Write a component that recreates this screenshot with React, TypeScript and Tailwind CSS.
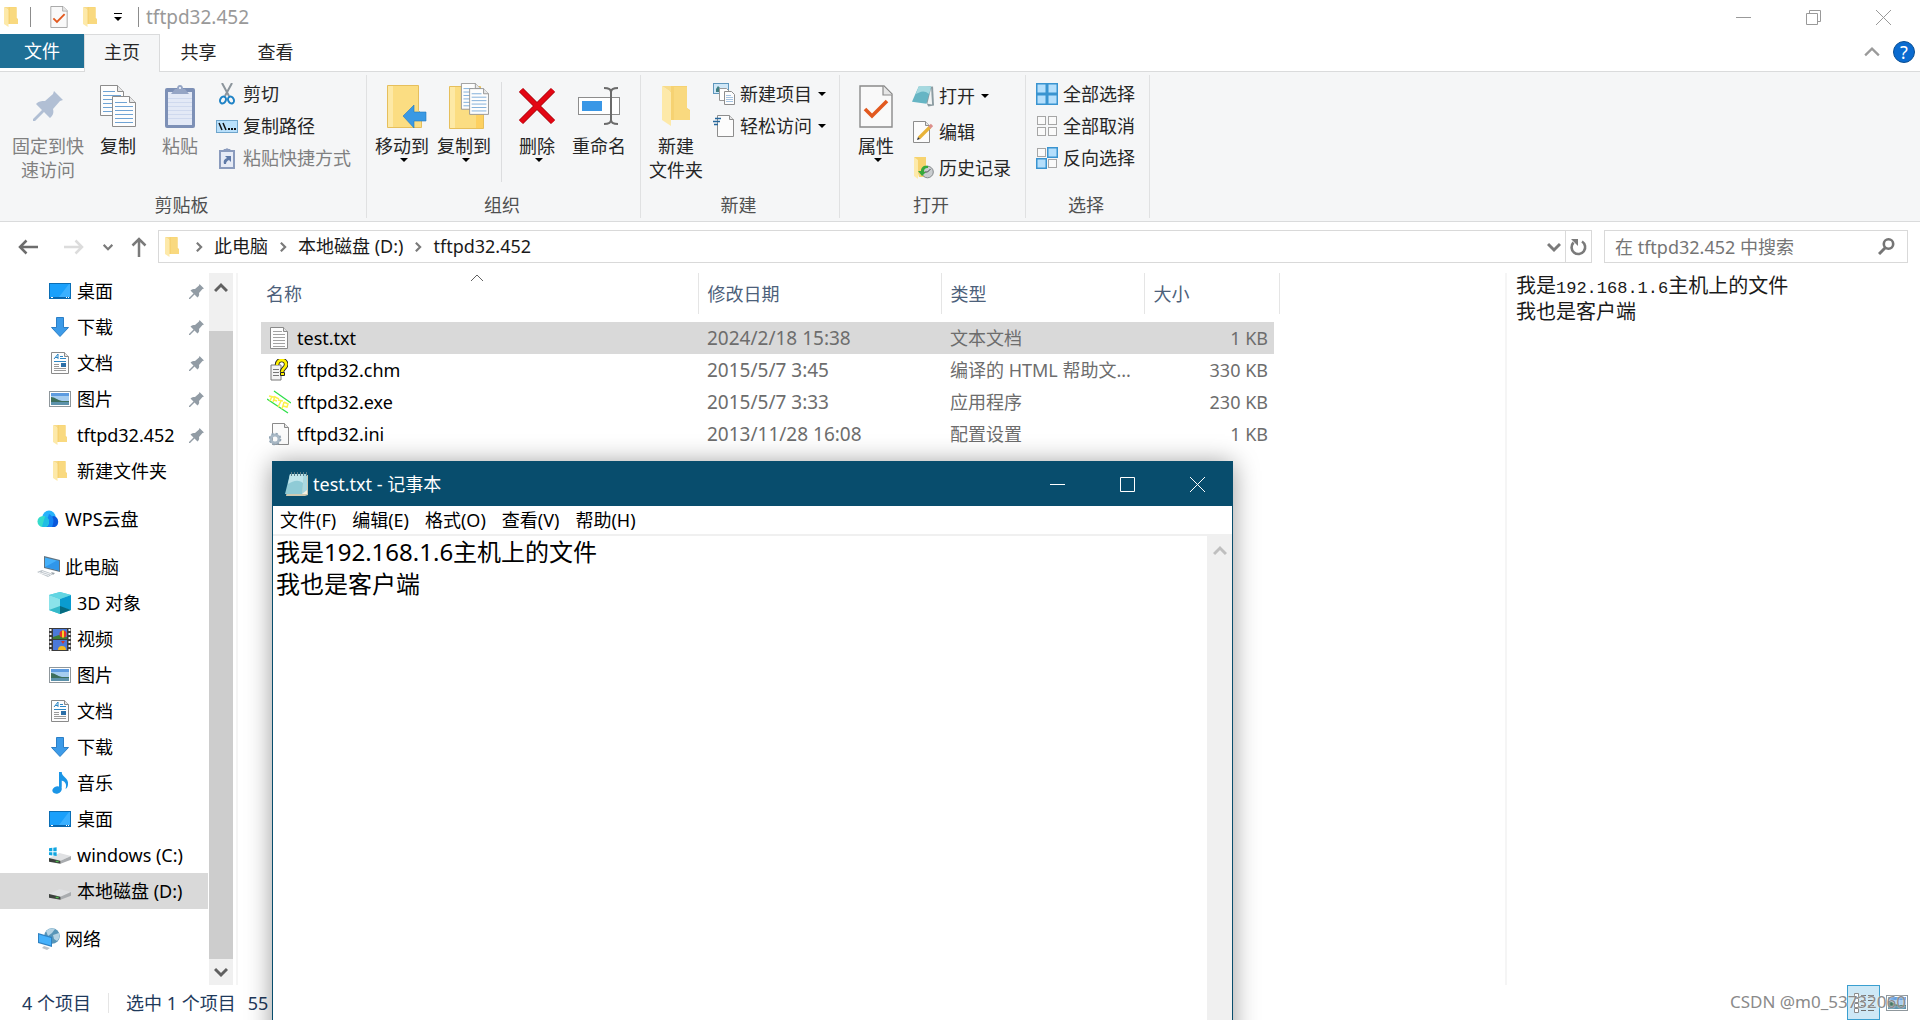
import type { ReactNode } from 'react';
import clsx from 'clsx';

type IconProps = { className?: string };

const FolderIcon = ({ className = 'w-[14px] h-5' }: IconProps) => (
  <svg viewBox="0 0 28 40" className={className} preserveAspectRatio="none" aria-hidden="true">
    <path d="M8 0h17v22l3 2v10H8z" fill="#f6d272" />
    <path d="M12 1h13v21l3 3v9H12z" fill="#f9d97f" />
    <path d="M0 0l9 6v34L0 34z" fill="#fde9a9" />
    <path d="M0 0h9v6z" fill="#f8dc8b" />
  </svg>
);

const CheckDocIcon = ({ className }: IconProps) => (
  <svg viewBox="0 0 34 43" className={className} aria-hidden="true">
    <path d="M1 1h24l8 8v33H1z" fill="#f9f9f9" stroke="#8b8b8b" strokeWidth="1.4" />
    <path d="M24 1v9h9" fill="#e6e6e6" stroke="#8b8b8b" strokeWidth="1.2" />
    <path d="M6 24l7 7 15-15" fill="none" stroke="#e2591f" strokeWidth="3.6" />
  </svg>
);

const PinIcon = ({ className }: IconProps) => (
  <svg viewBox="0 0 30 30" className={className} aria-hidden="true">
    <path
      d="M21 0l9 9-3 1-7 8c1 4 0 6-3 9l-6-6-9 9H0v-2l9-9-6-6c3-3 5-3 9-3l8-7z"
      fill="currentColor"
    />
  </svg>
);

const SheetLines = ({ x, y }: { x: number; y: number }) => (
  <g transform={`translate(${x} ${y})`}>
    <path d="M.5.5h17l6 6v24H.5z" fill="#fdfdfd" stroke="#8c8c8c" />
    <path d="M17.500.5v6h6" fill="#e8e8e8" stroke="#8c8c8c" />
    <path d="M3 6.500h12M3 10.500h18M3 14.500h18M3 18.500h18M3 22.500h18M3 26.500h18" stroke="#6fa3d4" />
  </g>
);

const CopyIcon = () => (
  <svg width="36" height="42" viewBox="0 0 36 42" aria-hidden="true">
    <SheetLines x={0} y={0} />
    <SheetLines x={12} y={11} />
  </svg>
);

const PasteIcon = () => (
  <svg width="30" height="44" viewBox="0 0 30 44" aria-hidden="true">
    <rect x="0" y="4" width="30" height="40" rx="2" fill="#7d90b6" />
    <rect x="3" y="8" width="24" height="33" fill="#e3e9f6" />
    <path d="M3 14.500h24M3 18.500h24M3 22.500h24M3 26.500h24M3 30.500h24M3 34.500h24" stroke="#cfd9ee" />
    <path d="M6 10l4-5h2a3 4 0 0 1 6 0h2l4 5z" fill="#95a5c5" />
    <path d="M14 3h2v2h-2z" fill="#dfe5f1" />
  </svg>
);

const CutIcon = () => (
  <svg width="16" height="22" viewBox="0 0 16 22" aria-hidden="true">
    <path d="M3 0l7 13M13 0L6 13" stroke="#8c959c" strokeWidth="2" />
    <ellipse cx="4" cy="17" rx="2.800" ry="3.600" transform="rotate(25 4 17)" fill="none" stroke="#1f83c6" strokeWidth="2" />
    <ellipse cx="12" cy="17" rx="2.800" ry="3.600" transform="rotate(-25 12 17)" fill="none" stroke="#1f83c6" strokeWidth="2" />
  </svg>
);

const CopyPathIcon = () => (
  <svg width="22" height="13" viewBox="0 0 22 13" aria-hidden="true">
    <rect x=".5" y=".5" width="21" height="12" fill="#b9e0fb" stroke="#6ea5cc" />
    <path d="M3 3l3 7M7 3l3 7" stroke="#111" strokeWidth="1.500" />
    <path d="M12 8h2v2h-2zM15 8h2v2h-2zM18 8h2v2h-2z" fill="#111" />
  </svg>
);

const PasteShortcutIcon = () => (
  <svg width="16" height="22" viewBox="0 0 16 22" aria-hidden="true">
    <rect x="0" y="3" width="16" height="19" fill="#8a9bbd" />
    <rect x="2" y="5" width="12" height="15" fill="#e6ebf6" />
    <path d="M3 5l2-3h1.500a2 2 0 0 1 3 0H11l2 3z" fill="#8a9bbd" />
    <path d="M6 9h6v6l-2-2c-2 1-3 2-3 4H5c-1-3 0-5 3-6z" fill="#5f7aa8" />
  </svg>
);

const MoveToIcon = () => (
  <svg width="40" height="44" viewBox="0 0 40 44" className="ml-[10px]" aria-hidden="true">
    <path d="M.5 1.500h31v25l3 3v14H.5z" fill="#fbdd82" stroke="#e6bf5c" />
    <path d="M1 2h5v41H1z" fill="#fde9a6" />
    <path d="M16 32l11-11v7h12v9H27v7z" fill="#3a99e4" stroke="#2478bd" strokeWidth=".6" />
  </svg>
);

const CopyToIcon = () => (
  <svg width="41" height="46" viewBox="0 0 41 46" className="ml-[10px]" aria-hidden="true">
    <path d="M.5 3.500h31v25l3 3v14H.5z" fill="#fbdd82" stroke="#e6bf5c" />
    <path d="M1 4h5v41H1z" fill="#fde9a6" />
    <path d="M27 32h7v13h-7z" fill="#fdd060" />
    <g transform="translate(12 0) scale(.82 .86)">
      <SheetLines x={0} y={0} />
      <SheetLines x={10} y={6} />
    </g>
  </svg>
);

const DeleteIcon = () => (
  <svg width="38" height="38" viewBox="0 0 38 38" aria-hidden="true">
    <path d="M3 3l32 32M35 3L3 35" stroke="#a8070f" strokeWidth="6" />
    <path d="M3 3l32 32M35 3L3 35" stroke="#e30613" strokeWidth="4.500" />
  </svg>
);

const RenameIcon = () => (
  <svg width="42" height="38" viewBox="0 0 42 38" aria-hidden="true">
    <rect x=".5" y="10.500" width="41" height="17" fill="#fff" stroke="#8d8d8d" />
    <rect x="4" y="14" width="20" height="10" fill="#3997e6" />
    <path d="M26 1c5 0 7 1 7 4v28c0 3-2 4-7 4M40 1c-5 0-7 1-7 4M40 37c-5 0-7-1-7-4" fill="none" stroke="#6b6b6b" strokeWidth="2" />
  </svg>
);

const NewItemIcon = () => (
  <svg width="22" height="22" viewBox="0 0 22 22" aria-hidden="true">
    <rect x=".5" y=".5" width="15" height="10" fill="#cfe7f7" stroke="#5f97bd" />
    <path d="M3 6l2-3 3 3v3H3z" fill="#3f7f84" />
    <path d="M6.500 5.500h7l3 3v9h-10z" fill="#fff" stroke="#999" />
    <path d="M11.500 8.500h7l3 3v10h-10z" fill="#fdfdfd" stroke="#8d8d8d" />
    <path d="M13 12.500h5M13 14.500h7M13 16.500h7M13 18.500h7" stroke="#a6c4e2" />
  </svg>
);

const EasyAccessIcon = () => (
  <svg width="22" height="22" viewBox="0 0 22 22" aria-hidden="true">
    <path d="M4.500.5h12l4 4v17h-16z" fill="#fcfcfc" stroke="#8d8d8d" />
    <path d="M16.500.5v4h4" fill="#e5e5e5" stroke="#8d8d8d" />
    <path d="M2 3.500h6M0 6.500h7M1 9.500h4" stroke="#26679c" strokeWidth="1.500" />
  </svg>
);

const NotepadIcon = () => (
  <svg width="24" height="24" viewBox="0 0 24 24" aria-hidden="true">
    <path d="M5 3h18v20l-3 1H1z" fill="#cfc9b0" />
    <path d="M5 2h14l-2 20H0z" fill="#8fcbd6" />
    <path d="M5 2h14l-1 9C13 7 8 9 3 12z" fill="#bfe5eb" />
    <path d="M19 2h3v20h-5z" fill="#a9d8e0" />
    <path d="M17 22l5-4v4z" fill="#f4f1e2" />
    <path d="M6.500 0v4M9.500 0v4M12.500 0v4M15.500 0v4M18.500 0v4M21.500 0v4" stroke="#5f7f88" />
  </svg>
);

const OpenIcon = () => (
  <svg width="23" height="22" viewBox="0 0 23 22" aria-hidden="true">
    <path d="M7 2l15-1 1 20-6 1z" fill="#8b9ba1" />
    <path d="M7 1h13l-5 18-15-2z" fill="#66b5c4" />
    <path d="M7 1h13l-2 8C12 4 8 7 4 9z" fill="#a5d9e0" />
    <path d="M20 3l1 17-5-1z" fill="#f1f4f4" />
  </svg>
);

const EditIcon = () => (
  <svg width="20" height="22" viewBox="0 0 20 22" aria-hidden="true">
    <path d="M.5.5h12l4 4v17H.5z" fill="#fcfcfc" stroke="#8d8d8d" />
    <path d="M12.500.5v4h4" fill="#e5e5e5" stroke="#8d8d8d" />
    <path d="M6 17L17 6" stroke="#e8b339" strokeWidth="3.200" />
    <path d="M16.500 6.500L19 4" stroke="#dc8f8c" strokeWidth="3.200" />
    <path d="M4 19l1-3 2 2z" fill="#333" />
  </svg>
);

const HistoryIcon = () => (
  <svg width="21" height="22" viewBox="0 0 21 22" aria-hidden="true">
    <path d="M1 0h12v20H6z" fill="#f7d36f" />
    <path d="M1 0l4 3v19l-4-3z" fill="#fdeaaa" />
    <circle cx="14.500" cy="15" r="5.800" fill="#c9cdd0" stroke="#84888b" />
    <path d="M14.500 15l3-3M14.500 15h-3" stroke="#4a4d50" />
    <path d="M15 9c-4-1-7 1-7 5H5l4 5 4-4h-2c0-3 1-4 4-4z" fill="#36a93c" />
  </svg>
);

const SelectIcon = ({ cells }: { cells: boolean[] }) => (
  <svg width="22" height="22" viewBox="0 0 22 22" aria-hidden="true">
    {cells.map((on, i) => (
      <rect
        key={i}
        x={(i % 2) * 11 + (on ? 0.75 : 1.5)}
        y={Math.floor(i / 2) * 11 + (on ? 0.75 : 1.5)}
        width={on ? 9.5 : 8}
        height={on ? 9.5 : 8}
        fill={on ? '#b5dffc' : '#fafafa'}
        stroke={on ? '#3a94d0' : '#a6a6a6'}
        strokeWidth={on ? 1.5 : 1}
      />
    ))}
  </svg>
);

const Chevron = ({ d, className, size = 14, width = 2.5 }: { d: 'up' | 'down' | 'right'; className?: string; size?: number; width?: number }) => {
  const paths = { up: 'M1 10l6-6 6 6', down: 'M1 4l6 6 6-6', right: 'M4 1l6 6-6 6' };
  return (
    <svg width={size} height={size} viewBox="0 0 14 14" className={className} aria-hidden="true">
      <path d={paths[d]} fill="none" stroke="currentColor" strokeWidth={width} />
    </svg>
  );
};

const Caret = ({ className }: IconProps) => (
  <svg width="8" height="4" viewBox="0 0 8 4" className={clsx('shrink-0', className)} aria-hidden="true">
    <path d="M0 0h8L4 4z" fill="#000" />
  </svg>
);

const Arrow = ({ className }: IconProps) => (
  <svg width="20" height="16" viewBox="0 0 20 16" className={className} aria-hidden="true">
    <path d="M20 8H2M8.500 1.500L2 8l6.500 6.500" fill="none" stroke="currentColor" strokeWidth="2.500" />
  </svg>
);

// Navigation pane icons

const DesktopIcon = () => (
  <svg width="22" height="16" viewBox="0 0 22 16" aria-hidden="true">
    <rect x=".5" y=".5" width="21" height="15" fill="#1aa0fb" stroke="#0b6eb5" />
    <path d="M10 14L20 1h1v13z" fill="#3bb0ff" />
    <path d="M1 14h20v1.500H1z" fill="#0b65ab" />
    <path d="M2 14h2v1H2zM17 14h1v1h-1zM19 14h1v1h-1z" fill="#fff" />
  </svg>
);

const DownloadIcon = () => (
  <svg width="18" height="20" viewBox="0 0 18 20" aria-hidden="true">
    <path d="M5.500.5h7v10h5L9 19.500.500 10.500h5z" fill="#3d9be8" stroke="#2b7fc7" />
  </svg>
);

const DocumentIcon = () => (
  <svg width="18" height="22" viewBox="0 0 18 22" aria-hidden="true">
    <path d="M.5.5h13l4 4v17H.5z" fill="#fdfdfd" stroke="#8a8a8a" />
    <path d="M13.500.5v4h4" fill="#e5e5e5" stroke="#8a8a8a" />
    <path d="M3 7l4-5v5M4 5.500h3M9 4.500h3M9 6.500h6M3 9.500h12" fill="none" stroke="#2d86c4" />
    <path d="M3 12.500h5M3 14.500h5M3 16.500h12M3 18.500h12" stroke="#9a9a9a" />
    <path d="M10 11h5v4h-5z" fill="#2b6fa8" />
  </svg>
);

const PictureIcon = () => (
  <svg width="22" height="16" viewBox="0 0 22 16" aria-hidden="true">
    <rect x=".5" y=".5" width="21" height="15" fill="#fff" stroke="#8f979c" />
    <path d="M2 2h18v12H2z" fill="#a6cdf0" />
    <path d="M2 2h18v3H2z" fill="#5d9be0" />
    <path d="M2 6c4 0 6 3 11 4h7v1H2z" fill="#3d6f5d" />
    <path d="M2 11h18v3H2z" fill="#5c92ab" />
  </svg>
);

const CloudIcon = () => (
  <svg width="23" height="18" viewBox="0 0 23 18" aria-hidden="true">
    <circle cx="12" cy="7" r="6.500" fill="#27b3fb" />
    <path d="M10 8l7-2a6 6 0 0 1 1 11H9z" fill="#0a58db" />
    <path d="M12 4c4 2 6 6 3 13H8z" fill="#1484f4" />
    <path d="M6 6a6 6 0 0 1 6 6c0 3-2 5-5 5H6A5.500 5.500 0 0 1 6 6z" fill="#35dccb" />
    <path d="M8 6.500c4 1 5 5 3 8s-4 3-6 2z" fill="#20bde4" />
  </svg>
);

const ThisPcIcon = () => (
  <svg width="23" height="22" viewBox="0 0 23 22" aria-hidden="true">
    <path d="M7 0l16 4v12L7 12z" fill="#5f7382" />
    <path d="M8 1.500l14 3.500v9.500L8 11z" fill="#44b0fa" />
    <path d="M8 11L20 4.500l2 .5v9.500z" fill="#2f96ea" />
    <path d="M0 16l5-2 11 4-5 3z" fill="#bcc3c9" />
    <path d="M2 16.500l10 3M5 15.500l9 3" stroke="#f4f6f8" />
    <path d="M14 16l4 1-2 2z" fill="#9aa3aa" />
  </svg>
);

const CubeIcon = () => (
  <svg width="22" height="22" viewBox="0 0 22 22" aria-hidden="true">
    <path d="M11 0l11 3v15l-11 4-11-4V3z" fill="#44cbdc" />
    <path d="M0 3l11 4v11L0 18z" fill="#8be3ea" />
    <path d="M11 7l11-4v15l-11-3z" fill="#0a9bcf" />
    <path d="M0 18l11-4v8z" fill="#35b9c9" />
    <path d="M11 14l11 4-11 4z" fill="#066a80" />
    <path d="M0 3l11-3 11 3-11 4z" fill="#62d5e2" />
  </svg>
);

const VideoIcon = () => (
  <svg width="22" height="23" viewBox="0 0 22 23" aria-hidden="true">
    <path d="M0 0h22v23H0z" fill="#3b3b3b" />
    <path d="M4 1h14v10H4zM4 12h14v10H4z" fill="#4b79d8" />
    <path d="M1.500 1v22M20.500 1v22" stroke="#f5f5f5" strokeWidth="2" strokeDasharray="2 2" />
    <path d="M4 9l6-2 8 2v2H4z" fill="#3e7b35" />
    <circle cx="14" cy="6" r="3.500" fill="#e8352b" />
    <path d="M13 2.500h2v7h-2z" fill="#f7d321" />
    <path d="M12 13h4l-2 3z" fill="#d2352b" />
    <path d="M9 22a4 4 0 0 1 8 0z" fill="#f4b81f" />
  </svg>
);

const MusicIcon = () => (
  <svg width="17" height="22" viewBox="0 0 17 22" aria-hidden="true">
    <path d="M7 0h2.500c.5 5 7.500 6 6.500 12.500-.2 2-1 3.500-2.500 4.500 1.500-4.500 0-7.500-4-8.500v9" fill="#1b95e6" />
    <path d="M7 0h2.500v17.500H7z" fill="#1b95e6" />
    <ellipse cx="5" cy="18" rx="4.700" ry="3.600" transform="rotate(-15 5 18)" fill="#1b95e6" />
  </svg>
);

const DriveIcon = ({ system = false }) => (
  <svg width="23" height="17" viewBox="0 0 23 17" aria-hidden="true">
    <path d="M0 11l11-5 12 3-11 5z" fill="#e0e1e3" />
    <path d="M12 14l11-5v4l-11 4z" fill="#a9acaf" />
    <path d="M0 11l12 3v3L0 15z" fill="#3c403d" />
    <path d="M7 14h3v1.500H7z" fill="#4fb84f" />
    {system && <path d="M0 1l3.500-.5V4H0zM4.500.400L8 0v4H4.500zM0 5h3.500v3.500L0 8zM4.500 5H8v4l-3.500-.5z" fill="#10a5e0" />}
  </svg>
);

const NetworkIcon = () => (
  <svg width="22" height="22" viewBox="0 0 22 22" aria-hidden="true">
    <circle cx="14" cy="8" r="7.800" fill="#5795b8" />
    <path d="M8 3c3-3 7-3 9-2l-3 4-4 3zM15 7l6-2c1 4 0 6-2 8l-3-2z" fill="#b3d2e3" />
    <path d="M0 5l14 4v10L0 15z" fill="#2f81c2" />
    <path d="M1 6.500l12 3.500v7.500L1 14z" fill="#45b1fb" />
    <path d="M6 18l6 2-3 2-5-2z" fill="#bcc3c9" />
  </svg>
);

// File list icons

const TextFileIcon = () => (
  <svg width="18" height="22" viewBox="0 0 18 22" aria-hidden="true">
    <path d="M.5.5h13l4 4v17H.5z" fill="#fdfdfd" stroke="#8a8a8a" />
    <path d="M13.500.5v4h4" fill="#e5e5e5" stroke="#8a8a8a" />
    <path d="M3 4.500h9M3 7.500h12M3 10.500h12M3 13.500h12M3 16.500h12M3 19.500h12" stroke="#a2a2a2" />
  </svg>
);

const HelpFileIcon = () => (
  <svg width="18" height="22" viewBox="0 0 18 22" aria-hidden="true">
    <path d="M1 6h10v15H1z" fill="#f4f4f4" stroke="#777" />
    <path d="M3 10.500h6M3 13.500h6M3 16.500h6" stroke="#777" />
    <path d="M7 6c0-7 10-6 9 0 0 3-4 3-4 7" fill="none" stroke="#222" strokeWidth="4.500" />
    <path d="M7 6c0-7 10-6 9 0 0 3-4 3-4 7" fill="none" stroke="#fff000" strokeWidth="2.800" />
    <path d="M10.500 13.500h4v3h-4z" fill="#fff000" stroke="#222" />
  </svg>
);

const TftpIcon = () => (
  <svg width="24" height="24" viewBox="0 0 24 24" aria-hidden="true">
    <path d="M7 1l17 12M0 9l21 14" stroke="#2fdf4a" strokeWidth="1.300" />
    <path
      d="M2 6l5 1M5 6l-2 5M8 6l-2 6M8 7l4 2M7 10l3 1M11 10l5 1M14 11l-3 6M17 12l-2 7M17 12l4 2-1 3-4-1"
      fill="none"
      stroke="#fbf04c"
      strokeWidth="1.500"
    />
  </svg>
);

const ConfigFileIcon = () => (
  <svg width="20" height="23" viewBox="0 0 20 23" aria-hidden="true">
    <path d="M3.500.5h12l4 4v17h-16z" fill="#fbfbfb" stroke="#8a8a8a" />
    <path d="M15.500.5v4h4" fill="#e5e5e5" stroke="#8a8a8a" />
    <circle cx="6" cy="16" r="4" fill="none" stroke="#a9b9c6" strokeWidth="3" />
    <circle cx="6" cy="16" r="5.600" fill="none" stroke="#93a5b4" strokeWidth="1.500" strokeDasharray="2.200 2.200" />
  </svg>
);

function BigButton({ icon, label, menu, muted, className }: { icon: ReactNode; label: string[]; menu?: boolean; muted?: boolean; className?: string }) {
  return (
    <button type="button" className={clsx('flex flex-col items-center pt-[7px] whitespace-nowrap', muted ? 'text-[#808080]' : 'text-[#262626]', className)}>
      <span className="flex h-12 items-center justify-center">{icon}</span>
      <span className="mt-1 flex flex-col leading-6">
        {label.map((line) => (
          <span key={line}>{line}</span>
        ))}
      </span>
      {menu && <Caret className="ml-1" />}
    </button>
  );
}

function SmallButton({ icon, label, menu, muted, tall }: { icon: ReactNode; label: string; menu?: boolean; muted?: boolean; tall?: boolean }) {
  return (
    <button type="button" className={clsx('flex items-center whitespace-nowrap', tall ? 'h-9' : 'h-8', muted ? 'text-[#808080]' : 'text-[#262626]')}>
      <span className="mr-[5px] flex w-[22px] justify-center">{icon}</span>
      {label}
      {menu && <Caret className="ml-[6px]" />}
    </button>
  );
}

function RibbonGroup({ title, className, children }: { title: string; className: string; children: ReactNode }) {
  return (
    <section className={clsx('my-[3px] flex shrink-0 flex-col border-r border-[#e0e1e2]', className)}>
      <div className="flex flex-1 items-start">{children}</div>
      <h2 className="pr-[3px] text-center leading-[26px] text-[#505050]">{title}</h2>
    </section>
  );
}

function WindowButtons({ maximized }: { maximized?: boolean }) {
  return (
    <div className="flex self-stretch">
      <button type="button" aria-label="最小化" className="flex w-[70px] items-center justify-center">
        <svg width="15" height="15" aria-hidden="true"><path d="M0 7.500h15" stroke="currentColor" /></svg>
      </button>
      <button type="button" aria-label={maximized ? '向下还原' : '最大化'} className="flex w-[70px] items-center justify-center">
        <svg width="15" height="15" fill="none" stroke="currentColor" aria-hidden="true">
          {maximized ? <path d="M.5 3.500h11v11H.5zM3.500 3.500v-3h11v11h-3" /> : <path d="M.5.5h14v14H.5z" />}
        </svg>
      </button>
      <button type="button" aria-label="关闭" className="flex w-[70px] items-center justify-center">
        <svg width="15" height="15" stroke="currentColor" aria-hidden="true"><path d="M0 0l15 15M15 0L0 15" /></svg>
      </button>
    </div>
  );
}

function Ribbon() {
  return (
    <div className="flex h-[151px] shrink-0 border-y border-[#dadbdc] bg-[#f5f6f7]">
      <RibbonGroup title="剪贴板" className="w-[367px]">
        <BigButton className="ml-3" muted icon={<PinIcon className="h-[30px] w-[30px] text-[#b1bfd4]" />} label={['固定到快', '速访问']} />
        <BigButton className="ml-4" icon={<CopyIcon />} label={['复制']} />
        <BigButton className="ml-[26px]" muted icon={<PasteIcon />} label={['粘贴']} />
        <div className="ml-[18px] pt-[3px]">
          <SmallButton icon={<CutIcon />} label="剪切" />
          <SmallButton icon={<CopyPathIcon />} label="复制路径" />
          <SmallButton muted icon={<PasteShortcutIcon />} label="粘贴快捷方式" />
        </div>
      </RibbonGroup>
      <RibbonGroup title="组织" className="w-[274px]">
        <BigButton className="ml-2" menu icon={<MoveToIcon />} label={['移动到']} />
        <BigButton className="ml-2" menu icon={<CopyToIcon />} label={['复制到']} />
        <div className="mt-[7px] ml-[10px] h-[100px] w-px bg-[#dcdddf]" />
        <BigButton className="ml-4" menu icon={<DeleteIcon />} label={['删除']} />
        <BigButton className="ml-4" icon={<RenameIcon />} label={['重命名']} />
      </RibbonGroup>
      <RibbonGroup title="新建" className="w-[199px]">
        <BigButton className="ml-2" icon={<FolderIcon className="h-10 w-7" />} label={['新建', '文件夹']} />
        <div className="ml-[10px] pt-[3px]">
          <SmallButton menu icon={<NewItemIcon />} label="新建项目" />
          <SmallButton menu icon={<EasyAccessIcon />} label="轻松访问" />
        </div>
      </RibbonGroup>
      <RibbonGroup title="打开" className="w-[186px]">
        <BigButton className="ml-[18px]" menu icon={<CheckDocIcon className="h-[43px] w-[34px]" />} label={['属性']} />
        <div className="ml-[18px] pt-[3px]">
          <SmallButton tall menu icon={<OpenIcon />} label="打开" />
          <SmallButton tall icon={<EditIcon />} label="编辑" />
          <SmallButton tall icon={<HistoryIcon />} label="历史记录" />
        </div>
      </RibbonGroup>
      <RibbonGroup title="选择" className="w-[124px]">
        <div className="ml-[10px] pt-[3px]">
          <SmallButton icon={<SelectIcon cells={[true, true, true, true]} />} label="全部选择" />
          <SmallButton icon={<SelectIcon cells={[false, false, false, false]} />} label="全部取消" />
          <SmallButton icon={<SelectIcon cells={[false, true, true, false]} />} label="反向选择" />
        </div>
      </RibbonGroup>
    </div>
  );
}

function AddressBar() {
  const crumbs = ['此电脑', '本地磁盘 (D:)', 'tftpd32.452'];
  return (
    <div className="mb-[2px] flex h-[49px] shrink-0 items-center pr-3 pl-[18px]">
      <button type="button" aria-label="后退" className="text-[#6d6d6d]"><Arrow /></button>
      <button type="button" aria-label="前进" className="ml-[26px] text-[#dcdcdc]"><Arrow className="rotate-180" /></button>
      <button type="button" aria-label="最近浏览的位置" className="ml-[19px] text-[#7a7a7a]"><Chevron d="down" size={10} width={3} /></button>
      <button type="button" aria-label="上移" className="ml-4 text-[#7a7a7a]"><Arrow className="rotate-90" /></button>
      <div className="ml-[9px] flex h-[33px] flex-1 items-center border border-[#d9d9d9]">
        <span className="mr-[15px] ml-[6px]"><FolderIcon /></span>
        {crumbs.map((crumb) => (
          <span key={crumb} className="flex items-center">
            <Chevron d="right" size={10} width={3} className="text-[#7a7a7a]" />
            <button type="button" className="mx-[10px] pb-px text-[#1a1a1a]">{crumb}</button>
          </span>
        ))}
        <button type="button" aria-label="展开" className="mr-1 ml-auto text-[#7a7a7a]"><Chevron d="down" width={3} /></button>
        <button type="button" aria-label="刷新" className="flex w-[26px] items-center justify-center self-stretch border-l border-[#d9d9d9] text-[#7a7a7a]">
          <svg width="17" height="18" viewBox="0 0 17 18" aria-hidden="true">
            <path d="M12 3.500A6.800 6.800 0 1 1 3.500 4.500" fill="none" stroke="currentColor" strokeWidth="2.600" />
            <path d="M1 1h7v7z" fill="currentColor" />
          </svg>
        </button>
      </div>
      <div className="ml-3 flex h-[33px] w-[304px] items-center border border-[#d9d9d9] pr-3 pl-[10px]">
        <input type="text" aria-label="搜索" placeholder="在 tftpd32.452 中搜索" className="min-w-0 flex-1 bg-transparent outline-none placeholder:text-[#757575]" />
        <svg width="17" height="17" viewBox="0 0 17 17" className="text-[#757575]" aria-hidden="true">
          <circle cx="10.500" cy="6" r="4.700" fill="none" stroke="currentColor" strokeWidth="2.600" />
          <path d="M7 10l-6 6" stroke="currentColor" strokeWidth="3" />
        </svg>
      </div>
    </div>
  );
}

type NavItem = { label: string; icon: ReactNode; pinned?: boolean; root?: boolean; active?: boolean };

const NAV_GROUPS: NavItem[][] = [
  [
    { label: '桌面', icon: <DesktopIcon />, pinned: true },
    { label: '下载', icon: <DownloadIcon />, pinned: true },
    { label: '文档', icon: <DocumentIcon />, pinned: true },
    { label: '图片', icon: <PictureIcon />, pinned: true },
    { label: 'tftpd32.452', icon: <FolderIcon />, pinned: true },
    { label: '新建文件夹', icon: <FolderIcon /> },
  ],
  [{ label: 'WPS云盘', icon: <CloudIcon />, root: true }],
  [
    { label: '此电脑', icon: <ThisPcIcon />, root: true },
    { label: '3D 对象', icon: <CubeIcon /> },
    { label: '视频', icon: <VideoIcon /> },
    { label: '图片', icon: <PictureIcon /> },
    { label: '文档', icon: <DocumentIcon /> },
    { label: '下载', icon: <DownloadIcon /> },
    { label: '音乐', icon: <MusicIcon /> },
    { label: '桌面', icon: <DesktopIcon /> },
    { label: 'windows (C:)', icon: <DriveIcon system /> },
    { label: '本地磁盘 (D:)', icon: <DriveIcon />, active: true },
  ],
  [{ label: '网络', icon: <NetworkIcon />, root: true }],
];

function NavigationPane() {
  return (
    <div className="flex w-[238px] shrink-0 border-r-2 border-[#f5f5f5]">
      <nav className="flex w-[208px] flex-col gap-3 text-black">
        {NAV_GROUPS.map((group, i) => (
          <ul key={i}>
            {group.map((item) => (
              <li key={item.label}>
                <button
                  type="button"
                  className={clsx('flex h-9 w-full items-center pr-1 whitespace-nowrap', item.root ? 'pl-[37px]' : 'pl-[49px]', item.active && 'bg-[#d9d9d9]')}
                >
                  <span className={clsx('flex shrink-0 justify-center', item.root ? 'mr-[5px] w-[23px]' : 'mr-[6px] w-[22px]')}>{item.icon}</span>
                  {item.label}
                  {item.pinned && <PinIcon className="ml-auto h-[15px] w-[15px] text-[#929ca5]" />}
                </button>
              </li>
            ))}
          </ul>
        ))}
      </nav>
      <div className="ml-px flex w-6 flex-col bg-[#cdcdcd] text-[#606060]">
        <div className="flex h-[58px] justify-center bg-[#f0f0f0] pt-2"><Chevron d="up" width={3} /></div>
        <div className="mt-auto flex h-[26px] items-center justify-center bg-[#f0f0f0]"><Chevron d="down" width={3} /></div>
      </div>
    </div>
  );
}

const FILES = [
  { name: 'test.txt', date: '2024/2/18 15:38', type: '文本文档', size: '1 KB', icon: <TextFileIcon />, selected: true },
  { name: 'tftpd32.chm', date: '2015/5/7 3:45', type: '编译的 HTML 帮助文...', size: '330 KB', icon: <HelpFileIcon /> },
  { name: 'tftpd32.exe', date: '2015/5/7 3:33', type: '应用程序', size: '230 KB', icon: <TftpIcon /> },
  { name: 'tftpd32.ini', date: '2013/11/28 16:08', type: '配置设置', size: '1 KB', icon: <ConfigFileIcon /> },
];

function FileList() {
  return (
    <main className="flex-1 pl-[23px]">
      <table className="w-[1018px] table-fixed">
        <colgroup>
          <col className="w-[437px]" />
          <col className="w-[243px]" />
          <col className="w-[203px]" />
          <col className="w-[130px]" />
          <col className="w-[5px]" />
        </colgroup>
        <thead>
          <tr className="h-[41px] text-left text-[#4c607a] [&>th]:border-r [&>th]:border-[#e5e5e5] [&>th]:font-normal">
            <th className="pl-[5px]">
              <div className="relative">
                名称
                <Chevron d="up" width={1} className="absolute -top-[11px] left-[204px] text-[#606060]" />
              </div>
            </th>
            <th className="pl-[9px]">修改日期</th>
            <th className="pl-[9px]">类型</th>
            <th className="pl-[9px]" colSpan={2}>大小</th>
          </tr>
        </thead>
        <tbody className="text-[#6d6d6d] before:block before:h-2">
          {FILES.map((file) => (
            <tr key={file.name} className={clsx('h-8 whitespace-nowrap', file.selected && '[&>td:not(:last-child)]:bg-[#d9d9d9]')}>
              <td>
                <div className="flex items-center text-black">
                  <span className="mr-[6px] ml-[6px] flex w-6 justify-center">{file.icon}</span>
                  {file.name}
                </div>
              </td>
              <td className="pl-[9px] text-[19px]">{file.date}</td>
              <td className="pl-[9px]">{file.type}</td>
              <td className="pr-[6px] text-right">{file.size}</td>
              <td />
            </tr>
          ))}
        </tbody>
      </table>
    </main>
  );
}

function PreviewPane() {
  return (
    <aside className="w-[415px] shrink-0 border-l-2 border-[#f5f5f5] pl-[9px] text-[20px] leading-[26px] text-[#1a1a1a]">
      <p>我是<span className="font-['Liberation_Mono',monospace] text-[17px] leading-none">192.168.1.6</span>主机上的文件</p>
      <p>我也是客户端</p>
    </aside>
  );
}

function Notepad() {
  const menus = ['文件(F)', '编辑(E)', '格式(O)', '查看(V)', '帮助(H)'];
  return (
    <section className="absolute top-[461px] -bottom-10 left-[272px] flex w-[961px] flex-col border border-[#084d6d] bg-white shadow-[0_2px_24px_rgba(0,0,0,0.4)]">
      <header className="flex h-11 shrink-0 items-center bg-[#084d6d] pl-3 text-white">
        <NotepadIcon />
        <h1 className="ml-1 flex-1">test.txt - 记事本</h1>
        <WindowButtons />
      </header>
      <div className="flex h-[30px] shrink-0 items-center gap-4 border-b-2 border-[#f0f0f0] pl-[7px] text-black">
        {menus.map((menu) => (
          <button key={menu} type="button">{menu}</button>
        ))}
      </div>
      <div className="flex flex-1">
        <textarea
          aria-label="文本编辑器"
          spellCheck={false}
          defaultValue={'我是192.168.1.6主机上的文件\n我也是客户端'}
          className="flex-1 resize-none overflow-hidden pl-[3px] text-2xl leading-8 text-black outline-none"
        />
        <div className="flex w-[25px] justify-center bg-[#f0f0f0] pt-2 text-[#bfbfbf]"><Chevron d="up" width={3} /></div>
      </div>
    </section>
  );
}

export default function App() {
  return (
    <div className="relative flex h-screen flex-col overflow-hidden bg-white font-['Noto_Sans','Noto_Sans_CJK_SC',sans-serif] text-[18px] leading-6">
      <header className="flex h-[34px] shrink-0 items-center pr-[2px] pl-1 text-[#999]">
        <FolderIcon />
        <div className="ml-3 h-5 w-px bg-[#8c8c8c]" />
        <button type="button" aria-label="属性" className="ml-[19px]"><CheckDocIcon className="h-[22px] w-[18px]" /></button>
        <button type="button" aria-label="新建文件夹" className="ml-[15px]"><FolderIcon /></button>
        <button type="button" aria-label="自定义快速访问工具栏" className="ml-[17px]">
          <svg width="8" height="8" aria-hidden="true"><path d="M0 0h8v1H0zM0 4h8L4 8z" fill="#000" /></svg>
        </button>
        <div className="ml-4 h-5 w-px bg-[#8c8c8c]" />
        <h1 className="ml-[7px] flex-1 text-[19px]">tftpd32.452</h1>
        <WindowButtons maximized />
      </header>

      <div className="relative z-10 -mb-px flex h-[38px] shrink-0 items-start text-[#262626]">
        <button type="button" className="h-[34px] w-[84px] bg-[#1f7096] text-white">文件</button>
        <button type="button" className="h-[38px] w-[76px] border border-b-0 border-[#dadbdc] bg-[#f5f6f7] pb-[3px]">主页</button>
        <button type="button" className="h-[37px] w-[77px] pb-[2px]">共享</button>
        <button type="button" className="h-[37px] w-[77px] pb-[2px]">查看</button>
        <div className="ml-auto flex h-[35px] items-center gap-[13px] pr-[5px]">
          <button type="button" aria-label="折叠功能区" className="text-[#9a9a9a]"><Chevron d="up" size={16} width={2} /></button>
          <button type="button" aria-label="帮助" className="h-[22px] w-[22px] rounded-full border border-[#0b4f93] bg-[#0a6bd0] text-[18px] leading-5 text-white">?</button>
        </div>
      </div>

      <Ribbon />
      <AddressBar />

      <div className="flex min-h-0 flex-1">
        <NavigationPane />
        <FileList />
        <PreviewPane />
      </div>

      <footer className="flex h-[35px] shrink-0 items-center pr-3 pl-[22px] text-[#1e395b]">
        <span>4 个项目</span>
        <div className="mx-[17px] h-5 w-px bg-[#e5e5e5]" />
        <span>选中 1 个项目</span>
        <span className="ml-3">55</span>
        <button type="button" aria-label="详细信息" className="ml-auto flex h-[35px] w-[33px] items-center justify-center border border-[#3a9fd0] bg-[#cde8f6]">
          <svg width="22" height="20" viewBox="0 0 22 20" fill="none" aria-hidden="true">
            <path d="M1.500.5h4v4h-4zM1.500 5.500h4v4h-4zM1.500 10.500h4v4h-4zM1.500 15.500h4v4h-4z" fill="#fff" stroke="#8a8a8a" />
            <path d="M8 2.500h5M15 2.500h6M8 7.500h5M15 7.500h6M8 12.500h5M15 12.500h6M8 17.500h5M15 17.500h6" stroke="#6e6e6e" />
          </svg>
        </button>
        <button type="button" aria-label="大缩略图" className="ml-[6px]"><PictureIcon /></button>
      </footer>

      <Notepad />

      <div className="pointer-events-none absolute right-[14px] bottom-[6px] z-20 text-[17px] text-[#8a8a8a] [text-shadow:0_0_2px_#fff]">CSDN @m0_53732060</div>
    </div>
  );
}
